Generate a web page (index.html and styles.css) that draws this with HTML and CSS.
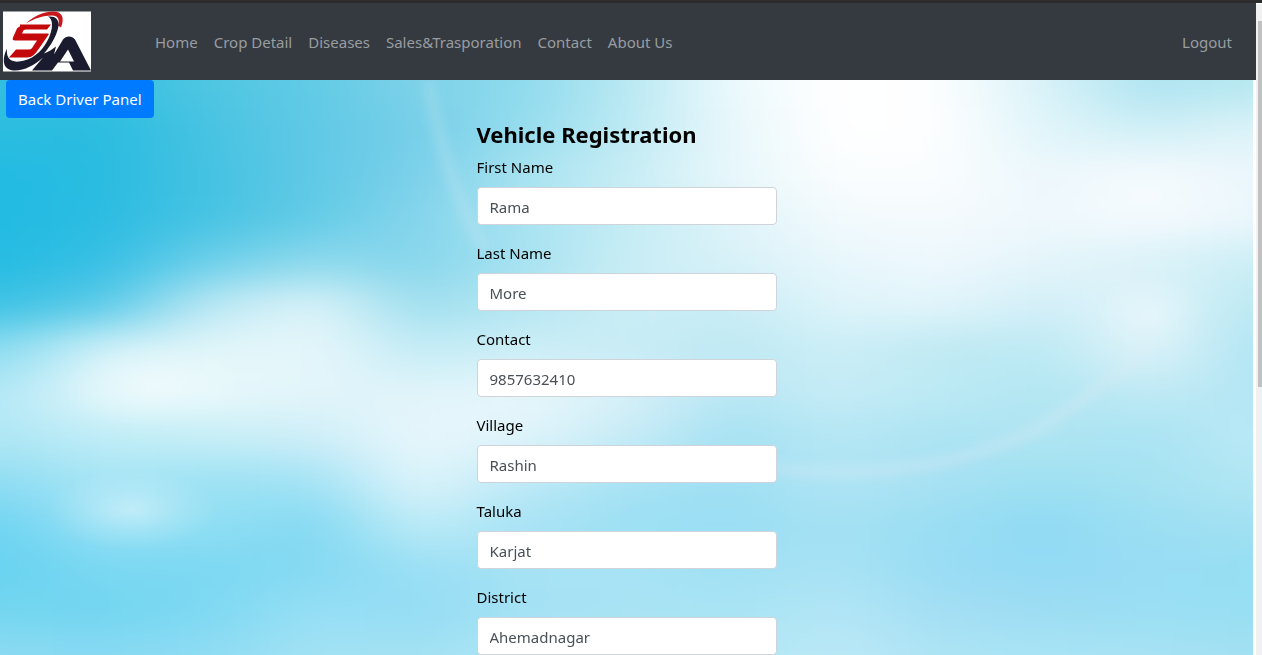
FILE: index.html
```html
<!DOCTYPE html>
<html lang="en">
<head>
<meta charset="utf-8">
<title>Vehicle Registration</title>
<link rel="stylesheet" href="styles.css">
</head>
<body>
<div class="top-edge"></div>
<div class="window">
  <div class="page">
    <nav class="navbar">
      <a class="brand" href="#" aria-label="Home page">
        <svg class="logo" viewBox="0 0 88 60" aria-hidden="true">
          <rect width="88" height="60" fill="#fff"/>
          <path d="M23 12C30 5 40 0 50 0c9 0 12 6 8 16l-3-2c2-6 0-10-6-10-9 0-18 3-26 8z" fill="#c8181c"/>
          <path d="M17 13h31l-4 5H23c-2 0-3 1-3 2l-1 2h26c1 0 1 1 0 2l-9 13c-4 6-7 9-12 9H6l7-8h13c2 0 3-1 4-3l4-6H12c-2 0-3-1-2-3l4-9c1-1 2-2 3-2z" fill="#c4090c"/>
          <path d="M45 5c9-1 12 5 10 12-2 8-7 17-14 25 5-2 8-4 12-7l-2 8 9-15c3-4 9-4 12 0l16 31H70l-4-8H55l-6 8H29l11-13c-9 8-20 14-30 13C-1 58-1 47 4 37c-1 9 3 14 12 13 12-1 22-9 28-20 6-11 7-22 1-25z" fill="#1a1b2e"/>
          <path d="M65 38l-8 12h14z" fill="#fff"/>
        </svg>
      </a>
      <ul class="nav-links">
        <li><a href="#">Home</a></li>
        <li><a href="#">Crop Detail</a></li>
        <li><a href="#">Diseases</a></li>
        <li><a href="#">Sales&amp;Trasporation</a></li>
        <li><a href="#">Contact</a></li>
        <li><a href="#">About Us</a></li>
      </ul>
      <a class="logout" href="#">Logout</a>
    </nav>
    <main class="content">
      <div class="sky" aria-hidden="true">
        <svg class="sky-defs"><filter id="soften" x="0" y="0" width="1" height="1" color-interpolation-filters="sRGB"><feGaussianBlur stdDeviation="26 18"/></filter></svg>
        <div class="bands">
          <div class="band b1"></div><div class="band b2"></div><div class="band b3"></div><div class="band b4"></div><div class="band b5"></div><div class="band b6"></div><div class="band b7"></div><div class="band b8"></div><div class="band b9"></div><div class="band b10"></div><div class="band b11"></div><div class="band b12"></div><div class="band b13"></div><div class="band b14"></div>
        </div>
        <svg class="wisps" viewBox="0 0 1253 575" preserveAspectRatio="none">
          <defs>
            <radialGradient id="glow"><stop offset="0" stop-color="#fff"/><stop offset=".5" stop-color="#fff" stop-opacity=".4"/><stop offset="1" stop-color="#fff" stop-opacity="0"/></radialGradient>
            <filter id="haze" x="-20%" y="-20%" width="140%" height="140%"><feGaussianBlur stdDeviation="6"/></filter>
          </defs>
          <ellipse cx="132" cy="430" rx="85" ry="40" fill="url(#glow)" opacity=".38"/>
          <ellipse cx="155" cy="305" rx="100" ry="45" fill="url(#glow)" opacity=".35"/>
          <ellipse cx="1150" cy="235" rx="60" ry="40" fill="url(#glow)" opacity=".25"/>
          <g fill="none" stroke="#e0ecf6" filter="url(#haze)">
            <path d="M428 0C438 60 455 120 485 170" stroke-width="10" opacity=".28"/>
            <path d="M776 388C900 405 1010 370 1060 335S1130 285 1150 265" stroke-width="9" opacity=".4"/>
          </g>
        </svg>
      </div>
      <a class="back-button" href="#">Back Driver Panel</a>
      <form class="registration">
        <h1>Vehicle Registration</h1>
        <div class="field"><label for="first">First Name</label><input id="first" type="text" value="Rama"></div>
        <div class="field"><label for="last">Last Name</label><input id="last" type="text" value="More"></div>
        <div class="field"><label for="contact">Contact</label><input id="contact" type="text" value="9857632410"></div>
        <div class="field"><label for="village">Village</label><input id="village" type="text" value="Rashin"></div>
        <div class="field"><label for="taluka">Taluka</label><input id="taluka" type="text" value="Karjat"></div>
        <div class="field"><label for="district">District</label><input id="district" type="text" value="Ahemadnagar"></div>
      </form>
    </main>
  </div>
  <div class="scrollbar" aria-hidden="true"><div class="thumb"></div></div>
</div>
</body>
</html>
```
FILE: styles.css
```css
* { box-sizing: border-box; }

body {
  margin: 0;
  min-height: 100vh;
  display: flex;
  flex-direction: column;
  font-family: "Noto Sans", "Open Sans", sans-serif;
  font-size: 15px;
  line-height: 24px;
  color: #000;
  background: #fff;
}

.top-edge { height: 3px; background: #2c2c2c; }

.window { flex: 1; display: flex; }

.page { flex: 1; min-width: 0; display: flex; flex-direction: column; }

.navbar {
  display: flex;
  align-items: center;
  padding: 8px 16px 8px 3px;
  background: #343a40;
}

.navbar a { color: #9a9da0; text-decoration: none; }

.brand { display: block; width: 144px; }

.logo { display: block; width: 88px; height: 61px; }

.nav-links {
  display: flex;
  flex: 1;
  margin: 0;
  padding: 0;
  list-style: none;
}

.nav-links a, .logout { display: block; padding: 8px; }

.content {
  position: relative;
  flex: 1;
  margin-right: 3px;
}

.sky { position: absolute; inset: 0; overflow: hidden; }

.sky-defs { position: absolute; width: 0; height: 0; }

/* One colour column wider than the page on each side, so the blur has no edge */
.bands {
  position: absolute;
  inset: -60px calc(-100% / 12);
  display: grid;
  grid-template-rows: 88px repeat(12, 1fr) 82px;
  filter: url(#soften);
}

.wisps { position: absolute; inset: 0; width: 100%; height: 100%; }

.b1 { background: linear-gradient(90deg, #30bfe0, #30bfe0, #38c0e0, #4ec6e2, #62cbe6, #7dd1e8, #8edbee, #b8e8f2, #ecf9fd, #ffffff, #fdfeff, #d8f2f8, #aee4f1, #b8e8f0, #b8e8f0); }
.b2 { background: linear-gradient(90deg, #2cbde0, #2cbde0, #2abce0, #48c3e2, #60c9e6, #76cfe8, #95dcee, #bdeaf3, #e8f7fb, #ffffff, #fdfeff, #e0f5fa, #d0eff6, #ddf3f8, #ddf3f8); }
.b3 { background: linear-gradient(90deg, #22bbe2, #22bbe2, #2abce1, #45c2e2, #60c9e6, #7bd0ea, #a8e3f0, #c8edf5, #e8f7fb, #fafdfe, #fafdfe, #ecf7fc, #f6fbfe, #eaf6fc, #eaf6fc); }
.b4 { background: linear-gradient(90deg, #22bbe2, #22bbe2, #2cbce2, #46c3e3, #62cbe6, #85d5ec, #a8e3f1, #c4ecf4, #def4f9, #f3fafd, #f5fafd, #eef8fd, #f6fbfe, #ecf7fc, #ecf7fc); }
.b5 { background: linear-gradient(90deg, #26bce3, #26bce3, #36bfe4, #6ccfea, #8cd9ec, #86d6ec, #a6e2f1, #c8edf5, #d8f1f8, #e8f7fc, #eef8fd, #e4f5fa, #daf2f8, #cceef6, #cceef6); }
.b6 { background: linear-gradient(90deg, #3cc2e4, #3cc2e4, #5ccae8, #bce8f4, #dcf3f8, #a0dfef, #b4e6f2, #cceef6, #c8ecf5, #def4fa, #e2f5fa, #d2eef8, #e0f4fa, #bce9f2, #bce9f2); }
.b7 { background: linear-gradient(90deg, #8cdcf0, #8cdcf0, #d4f2f9, #e2f6f9, #e6f6fb, #c4ecf6, #cceef6, #c8ecf5, #bfe9f3, #cceef7, #bfe9f3, #bceaf4, #e0f3f9, #b0e5f3, #b0e5f3); }
.b8 { background: linear-gradient(90deg, #b4e8f6, #b4e8f6, #e6f8fb, #e8f8fb, #e2f5fa, #e0f4fa, #e8f7fc, #d8f0f8, #b8e7f3, #c6ecf6, #bceaf4, #b2e6f2, #c0eaf4, #b4e6f4, #b4e6f4); }
.b9 { background: linear-gradient(90deg, #b0e7f5, #b0e7f5, #c0edf6, #c8eff6, #cfeef8, #e8f7fc, #e0f4fa, #c8ecf6, #a6e1f3, #b6e7f4, #ace3f3, #b0e5f2, #aae3f3, #bae9f5, #bae9f5); }
.b10 { background: linear-gradient(90deg, #90ddf3, #90ddf3, #a8e5f5, #9de2f4, #a4e3f5, #dff4fb, #c0eaf6, #a8e3f4, #a0dff3, #b0e5f4, #a8e1f3, #9ee1f2, #a6e2f2, #b2e7f4, #b2e7f4); }
.b11 { background: linear-gradient(90deg, #70d5f2, #70d5f2, #98e0f4, #90dff3, #84d9f2, #bfecf7, #a8e3f5, #9cdff4, #9adef4, #a4e1f3, #9adef3, #8fdaf3, #9cdff3, #a2e0f2, #a2e0f2); }
.b12 { background: linear-gradient(90deg, #66d2f0, #66d2f0, #7cd8f2, #7cd8f2, #84d9f2, #9adff5, #a6e2f4, #a8e4f4, #a0e0f4, #a8e2f4, #98ddf4, #93daf4, #98dcf4, #96dff3, #96dff3); }
.b13 { background: linear-gradient(90deg, #74d6f0, #74d6f0, #72d5f1, #7ed9f2, #96dff5, #94dcf4, #a4e1f4, #a8e3f4, #a8e4f4, #b2e6f6, #a4def4, #9ddcf3, #9adff4, #98dff3, #98dff3); }
.b14 { background: linear-gradient(90deg, #8cdbf2, #8cdbf2, #88daf2, #8edcf3, #a4e2f4, #a2e2f3, #aee6f5, #b0e6f5, #b0e6f5, #bce9f7, #ace4f4, #a8e4f5, #a8e2f4, #a2e0f2, #a2e0f2); }

.back-button {
  position: relative;
  display: block;
  width: max-content;
  margin-left: 6px;
  padding: 7px 12px;
  border-radius: 4px;
  background: #007bff;
  color: #fff;
  text-decoration: none;
}

.registration {
  position: relative;
  width: 300px;
  margin: 0 auto;
}

h1 {
  margin: 0 0 6px;
  padding-top: 2px;
  font-size: 22px;
  line-height: 29px;
  font-weight: 700;
}

.field { margin-bottom: 16px; }

.field:last-child { margin-bottom: 0; }

label { display: block; margin-bottom: 8px; }

input {
  display: block;
  width: 100%;
  height: 38px;
  padding: 8px 12px 6px;
  border: 1px solid #ced4da;
  border-radius: 4px;
  background: #fff;
  color: #495057;
  font: inherit;
}

.scrollbar {
  width: 6px;
  margin-top: 1px;
  padding: 17px 0 0 2px;
  background: #f1f1f1;
}

.thumb { height: 58vh; max-height: 366px; background: #c1c1c1; }
```
